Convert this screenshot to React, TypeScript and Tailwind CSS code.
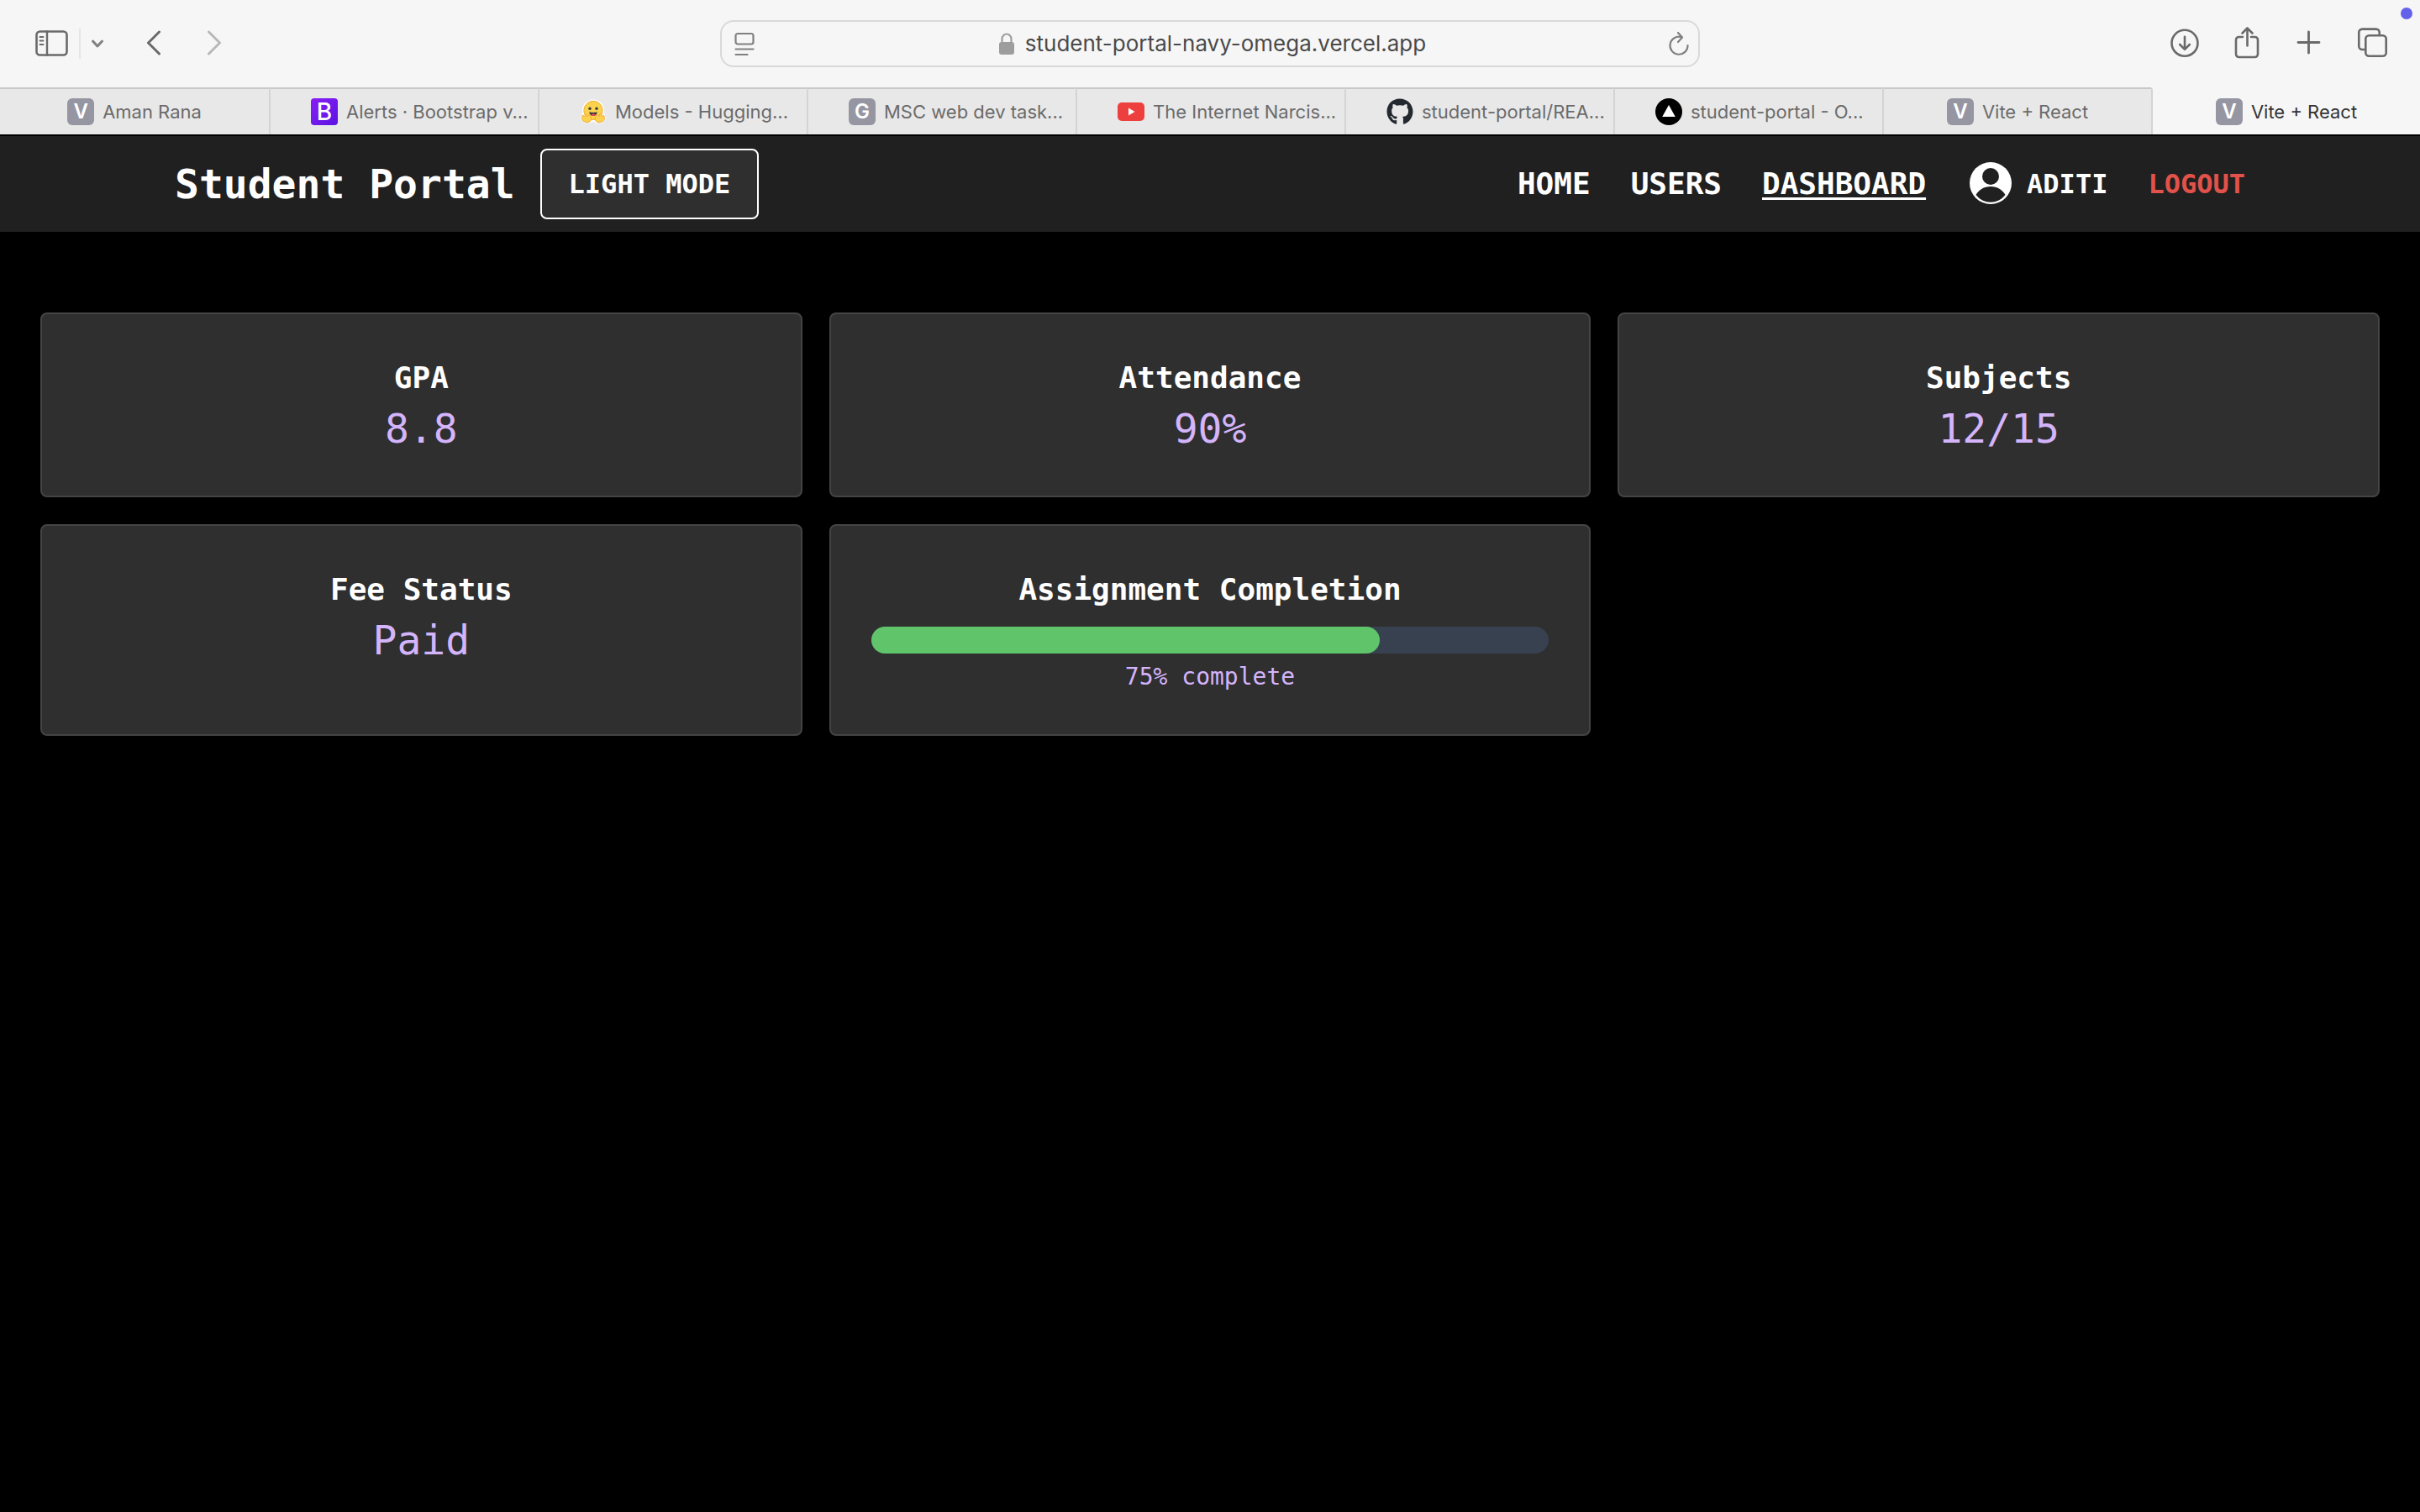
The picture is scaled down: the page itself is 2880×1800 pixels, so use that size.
import React from "react";
import { FaGithub } from "react-icons/fa";

const ink = "#6a6a6a";

function Letter({ letter }: { letter: string }) {
  return (
    <span className="flex size-8 shrink-0 items-center justify-center rounded-md bg-[#9696a3] text-[24px] font-semibold leading-8 text-white">
      {letter}
    </span>
  );
}

function Bootstrap() {
  return (
    <span className="flex size-8 shrink-0 items-center justify-center rounded-sm bg-linear-to-br from-[#8a1df5] to-[#5a12e2] text-[28px] font-medium leading-8 text-white">
      B
    </span>
  );
}

function HuggingFace() {
  return (
    <svg className="size-8 shrink-0" viewBox="0 0 32 32" aria-hidden="true">
      <g fill="#fff" stroke="#fff" strokeWidth="3">
        <circle cx="16" cy="14.5" r="11.5" />
        <path d="M3.500 20L2.500 24l4 4h6l3.500-3l3.500 3h6l4-4l-1-4z" />
      </g>
      <circle cx="16" cy="14.5" r="11.2" fill="#fad24b" stroke="#f3b13c" strokeWidth="1" />
      <circle cx="12" cy="12.3" r="1.700" fill="#3a3b45" />
      <circle cx="20" cy="12.3" r="1.700" fill="#3a3b45" />
      <path d="M11.500 16c1.500 1.200 7.500 1.200 9 0c.4 3-2 5-4.500 5s-4.900-2-4.500-5z" fill="#3a3b45" />
      <path d="M13.500 19.700c1-1.500 4-1.500 5 0c-1.200 1.700-3.800 1.700-5 0z" fill="#ef4e4e" />
      <path d="M3 22c-.6-1.500 1-2.500 2-1.200l1 1c0-2 .6-3.300 1.600-3.200c1 0 1 1.500 1.400 3l2-1.800c1.300-.8 2 .5 1.300 1.500c2 2 2 5-.3 6.500c-2.500 1.500-6 1-8-1c-1.500-1.600-2-3-1-4.800z" fill="#fad24b" stroke="#f3a93c" strokeWidth="1" />
      <path d="M29 22c.6-1.500-1-2.500-2-1.200l-1 1c0-2-.6-3.300-1.600-3.200c-1 0-1 1.500-1.400 3l-2-1.800c-1.300-.8-2 .5-1.300 1.500c-2 2-2 5 .3 6.500c2.500 1.500 6 1 8-1c1.500-1.600 2-3 1-4.800z" fill="#fad24b" stroke="#f3a93c" strokeWidth="1" />
    </svg>
  );
}

function YouTube() {
  return (
    <svg className="size-8 shrink-0" viewBox="0 0 32 32" aria-hidden="true">
      <rect x="0" y="5" width="32" height="22" rx="5" fill="#ee3f3f" />
      <path d="M13 11.500v9l7.500-4.500z" fill="#fff" />
    </svg>
  );
}

function Vercel() {
  return (
    <svg className="size-8 shrink-0" viewBox="0 0 32 32" aria-hidden="true">
      <circle cx="16" cy="16" r="16" fill="#000" />
      <path d="M16 8l7.800 14H8.200z" fill="#fff" />
    </svg>
  );
}

type Tab = { title: string; icon: React.ReactNode; clipped?: boolean; active?: boolean };

const tabs: Tab[] = [
  { title: "Aman Rana", icon: <Letter letter="V" /> },
  { title: "Alerts · Bootstrap v...", icon: <Bootstrap />, clipped: true },
  { title: "Models - Hugging...", icon: <HuggingFace />, clipped: true },
  { title: "MSC web dev task...", icon: <Letter letter="G" />, clipped: true },
  { title: "The Internet Narcis...", icon: <YouTube />, clipped: true },
  { title: "student-portal/REA...", icon: <FaGithub className="size-8 shrink-0 text-[#24292f]" />, clipped: true },
  { title: "student-portal - O...", icon: <Vercel />, clipped: true },
  { title: "Vite + React", icon: <Letter letter="V" /> },
  { title: "Vite + React", icon: <Letter letter="V" />, active: true },
];

function Toolbar() {
  return (
    <div className="relative grid h-[104px] grid-cols-[1fr_minmax(0,1166px)_1fr] items-center">
      <div className="flex items-center pl-[42px]">
        <button type="button" aria-label="Show sidebar">
          <svg className="block h-8 w-10" viewBox="0 1 40 32" fill="none" stroke={ink} strokeLinecap="round">
            <rect x="1.500" y="2.500" width="36" height="28" rx="4" strokeWidth="2.600" />
            <path d="M14 2.500v28" strokeWidth="2.400" />
            <path d="M5.500 9h4M5.500 13.500h4M5.500 18h4" strokeWidth="1.800" />
          </svg>
        </button>
        <span className="ml-3 h-9 w-0.5 bg-[#e6e6e6]" />
        <button type="button" aria-label="Tab groups" className="ml-3">
          <svg className="block h-4 w-4" viewBox="0 0 16 16" fill="none" stroke="#808080" strokeWidth="3" strokeLinecap="round" strokeLinejoin="round">
            <path d="M2.500 5l5.500 6l5.500-6" />
          </svg>
        </button>
        <button type="button" aria-label="Back" className="ml-[49px]">
          <svg className="block h-8 w-5" viewBox="0 1 20 32" fill="none" stroke={ink} strokeWidth="3" strokeLinecap="round" strokeLinejoin="round">
            <path d="M16.500 3L3.500 16l13 13" />
          </svg>
        </button>
        <button type="button" aria-label="Forward" className="ml-[52px]">
          <svg className="block h-8 w-5" viewBox="0 1 20 32" fill="none" stroke="#b8b8b8" strokeWidth="3" strokeLinecap="round" strokeLinejoin="round">
            <path d="M3.500 3l13 13l-13 13" />
          </svg>
        </button>
      </div>

      <div className="flex h-14 items-center justify-between rounded-[16px] border-2 border-[#d9d9d9] pl-[14px] pr-[9px]">
        <button type="button" aria-label="Reader">
          <svg className="block h-8 w-7" viewBox="0 0 28 32" fill="none" stroke="#808080" strokeWidth="2.200" strokeLinecap="round">
            <rect x="2.500" y="4" width="21" height="12.500" rx="2.500" />
            <path d="M2.500 22.500h21M2.500 29h14" />
          </svg>
        </button>
        <button type="button" className="flex items-center gap-3 text-[26px] leading-8 text-[#4a4a4a]">
          <svg className="block h-7 w-5" viewBox="0 0 20 28" aria-hidden="true">
            <rect x="1" y="12" width="18" height="15" rx="3" fill="#9d9d9d" />
            <path d="M4.500 13V8.500a5.500 6 0 0 1 11 0V13" fill="none" stroke="#9d9d9d" strokeWidth="2.200" />
          </svg>
          student-portal-navy-omega.vercel.app
        </button>
        <button type="button" aria-label="Reload">
          <svg className="block h-8 w-7" viewBox="0 0 28 32" fill="none" stroke="#808080" strokeWidth="2.200" strokeLinecap="round" strokeLinejoin="round">
            <path d="M17 8.200A10.500 10.500 0 1 0 24.500 18" />
            <path d="M13 3l5 5.500l-5 5.500" />
          </svg>
        </button>
      </div>

      <div className="flex items-center justify-end gap-9 pr-[36px]">
        <button type="button" aria-label="Downloads">
          <svg className="block size-10 overflow-visible" viewBox="0 0 40 40" fill="none" stroke={ink} strokeWidth="2.600" strokeLinecap="round" strokeLinejoin="round">
            <circle cx="24" cy="19.300" r="15.500" />
            <path d="M24 11.800v15M18.200 21l5.800 5.800l5.800-5.800" />
          </svg>
        </button>
        <button type="button" aria-label="Share">
          <svg className="block size-10" viewBox="0 0 40 40" fill="none" stroke={ink} strokeWidth="2.600" strokeLinecap="round" strokeLinejoin="round">
            <path d="M17 12H12.500a3.500 3.500 0 0 0-3.500 3.500V32.500a3.500 3.500 0 0 0 3.500 3.500h19a3.500 3.500 0 0 0 3.500-3.500V15.500a3.500 3.500 0 0 0-3.500-3.500h-4.500" />
            <path d="M22.500 22.500V1.500M16.500 7.500L22.500 1.500L28.500 7.500" />
          </svg>
        </button>
        <button type="button" aria-label="New tab">
          <svg className="block size-10" viewBox="0 0 40 40" fill="none" stroke={ink} strokeWidth="2.800" strokeLinecap="round">
            <path d="M19.500 6v25M7 18.500h25" />
          </svg>
        </button>
        <button type="button" aria-label="Tab overview">
          <svg className="block size-10" viewBox="0 0 40 40" fill="none" stroke={ink} strokeWidth="2.600" strokeLinejoin="round">
            <path d="M11.300 27H7.300a4 4 0 0 1-4-4V6.600a4 4 0 0 1 4-4h16.400a4 4 0 0 1 4 4v3.700" />
            <rect x="11.300" y="10.300" width="24.400" height="24.400" rx="4" />
          </svg>
        </button>
      </div>
      <span className="absolute right-[9px] top-[9px] size-[14px] rounded-full bg-[#6360ea]" />
    </div>
  );
}

function TabStrip() {
  return (
    <div role="tablist" className="grid h-14 grid-cols-9">
      {tabs.map((tab, i) => (
        <button
          key={i}
          type="button"
          role="tab"
          aria-selected={!!tab.active}
          className={
            "flex min-w-0 items-center gap-[10px] whitespace-nowrap border-t-2 text-[22px] leading-8 " +
            (i > 0 ? "border-l-2 border-l-[#d4d4d4] " : "") +
            (tab.active ? "border-t-[#f6f6f6] bg-[#f6f6f6] text-[#333333] " : "border-t-[#c8c8c8] bg-[#e8e8e8] text-[#6b6b6b] ") +
            (tab.clipped ? "pl-12" : "justify-center")
          }
        >
          {tab.icon}
          <span>{tab.title}</span>
        </button>
      ))}
    </div>
  );
}

function SiteHeader() {
  return (
    <header className="flex h-[116px] items-center justify-between border-t-2 border-black bg-[#202020] px-[208px] text-white">
      <div className="flex items-center gap-[30px]">
        <h1 className="text-[48px] font-bold leading-[64px]">Student Portal</h1>
        <button type="button" className="rounded-lg border-2 border-white bg-[#2f2f2f] px-8 py-4 text-[32px] font-semibold leading-[48px]">
          LIGHT MODE
        </button>
      </div>
      <nav className="flex items-center gap-12 text-[36px] font-semibold leading-[56px]">
        <a href="#home">HOME</a>
        <a href="#users">USERS</a>
        <a href="#dashboard" className="underline decoration-[3px] underline-offset-4">DASHBOARD</a>
        <a href="#profile" className="flex items-center gap-3 text-[32px] leading-[48px]">
          <svg className="size-[60px]" viewBox="0 0 60 60" aria-hidden="true">
            <circle cx="29" cy="29" r="25" fill="#fff" />
            <circle cx="29" cy="21" r="10" fill="#202020" />
            <path d="M29 33c8 0 14 4 17.500 10a22 22 0 0 1-35 0C15 37 21 33 29 33z" fill="#202020" />
          </svg>
          ADITI
        </a>
        <button type="button" className="text-[32px] leading-[48px] text-[#e0524a]">LOGOUT</button>
      </nav>
    </header>
  );
}

function Card({ title, children }: { title: string; children: React.ReactNode }) {
  return (
    <section className="rounded-lg border-2 border-[#444444] bg-[#2f2f2f] p-12 text-center">
      <h2 className="text-[36px] font-bold leading-[56px] text-white">{title}</h2>
      {children}
    </section>
  );
}

function Value({ children }: { children: React.ReactNode }) {
  return <p className="text-[48px] leading-[64px] text-[#d4b4fb]">{children}</p>;
}

export default function App() {
  const completion = 75;
  return (
    <div className="min-h-screen bg-black">
      <div className="bg-[#f6f6f6] font-['Inter','Liberation_Sans',sans-serif]">
        <Toolbar />
        <TabStrip />
      </div>
      <div className="font-['DejaVu_Sans_Mono','Liberation_Mono',monospace]">
        <SiteHeader />
        <main className="grid grid-cols-3 gap-8 px-12 py-24">
          <Card title="GPA"><Value>8.8</Value></Card>
          <Card title="Attendance"><Value>90%</Value></Card>
          <Card title="Subjects"><Value>12/15</Value></Card>
          <Card title="Fee Status"><Value>Paid</Value></Card>
          <Card title="Assignment Completion">
            <div
              role="progressbar"
              aria-label="Assignment completion"
              aria-valuenow={completion}
              className="mt-4 h-8 rounded-full bg-[#384150]"
            >
              <div className="h-8 rounded-full bg-[#5fc46a]" style={{ width: `${completion}%` }} />
            </div>
            <p className="mt-2 text-[28px] leading-10 text-[#d4b4fb]">{completion}% complete</p>
          </Card>
        </main>
      </div>
    </div>
  );
}
